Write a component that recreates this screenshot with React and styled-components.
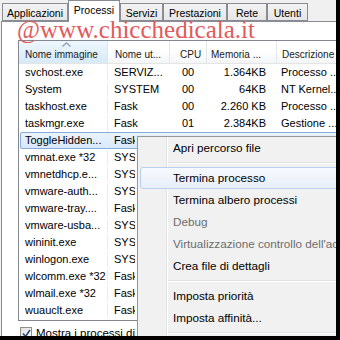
import React from "react";
import styled, { createGlobalStyle } from "styled-components";

const Global = createGlobalStyle`
  html, body { margin: 0; padding: 0; background: #000; }
  body { width: 340px; height: 340px; overflow: hidden; }
`;

const Frame = styled.div`
  width: 336px;
  height: 336px;
  position: relative;
  overflow: hidden;
  background: #f0f0f0;
  display: flex;
  flex-direction: column;
  font-family: "Liberation Sans", Arial, sans-serif;
  color: #000;
`;

const TabStrip = styled.div`
  display: flex;
  align-items: flex-end;
  height: 21px;
  padding-left: 2px;
  position: relative;
  z-index: 2;
`;

const Tab = styled.div`
  box-sizing: border-box;
  width: ${(p) => p.$w}px;
  height: ${(p) => (p.$active ? 22 : 18)}px;
  margin-bottom: ${(p) => (p.$active ? -1 : 0)}px;
  border: 1px solid #898c95;
  border-bottom: ${(p) => (p.$active ? "none" : "1px solid #898c95")};
  background: ${(p) =>
    p.$active ? "#fff" : "linear-gradient(#f3f3f3, #e6e6e6)"};
  display: flex;
  align-items: center;
  justify-content: center;
  padding-top: ${(p) => (p.$active ? 0 : 1)}px;
  padding-bottom: ${(p) => (p.$active ? 4 : 0)}px;
  font-size: 10.5px;
  white-space: nowrap;
`;

const Panel = styled.div`
  flex: 1;
  margin-left: 1px;
  background: #fff;
  border-top: 1px solid #898c95;
  border-left: 1px solid #898c95;
  padding: 18px 0 0 16px;
  display: flex;
  flex-direction: column;
`;

const Watermark = styled.div`
  position: absolute;
  left: 17px;
  top: 22px;
  height: 16px;
  font-family: "Liberation Serif", "Times New Roman", serif;
  font-size: 25px;
  line-height: 16px;
  color: #e25a5a;
  white-space: nowrap;
  z-index: 3;
  pointer-events: none;
`;

const List = styled.div`
  box-sizing: border-box;
  width: 330px;
  height: 281px;
  border: 1px solid #828790;
  border-right: none;
  background: #fff;
  display: flex;
  flex-direction: column;
`;

const Header = styled.div`
  display: flex;
  height: 23px;
  box-sizing: border-box;
  border-bottom: 1px solid #e5e5e5;
  flex: none;
`;

const HeadCell = styled.div`
  position: relative;
  box-sizing: border-box;
  width: ${(p) => p.$w}px;
  flex: none;
  padding-left: ${(p) => p.$pl}px;
  border-right: 1px solid #e3e6ea;
  background: ${(p) =>
    p.$sorted
      ? "linear-gradient(#eef7fd 0%, #e3f1fb 45%, #d7eaf8 100%)"
      : "linear-gradient(#ffffff 0%, #ffffff 45%, #f4f5f7 100%)"};
  font-size: 10px;
  line-height: 23px;
  padding-top: 2px;
  color: #1a1a1a;
  white-space: nowrap;
  overflow: hidden;
`;

const SortArrow = styled.svg`
  position: absolute;
  left: 43px;
  top: 1px;
`;

const Row = styled.div`
  display: flex;
  box-sizing: border-box;
  height: 17px;
  margin-left: 1px;
  border: 1px solid ${(p) => (p.$selected ? "#84acdd" : "transparent")};
  border-radius: 2px;
  background: ${(p) =>
    p.$selected ? "linear-gradient(#eaf3fd, #d9e8fb)" : "transparent"};
  font-size: 11px;
  line-height: 15px;
  flex: none;
`;

const Cell = styled.div`
  box-sizing: border-box;
  width: ${(p) => p.$w}px;
  flex: none;
  padding-left: ${(p) => p.$pl || 0}px;
  padding-right: ${(p) => p.$pr || 0}px;
  text-align: ${(p) => (p.$right ? "right" : "left")};
  border-right: ${(p) => (p.$line ? "1px solid #ececec" : "none")};
  white-space: nowrap;
  overflow: hidden;
`;

const CheckRow = styled.div`
  display: flex;
  align-items: center;
  gap: 4px;
  margin-top: 6px;
  padding-left: 2px;
  font-size: 11.5px;
  white-space: nowrap;
`;

const CheckBox = styled.div`
  box-sizing: border-box;
  width: 12px;
  height: 12px;
  border: 1px solid #8f8f8f;
  background: linear-gradient(135deg, #e0e0e0, #fdfdfd);
  display: flex;
  align-items: center;
  justify-content: center;
  flex: none;
`;

const Menu = styled.div`
  position: absolute;
  left: 137px;
  top: 136px;
  width: 230px;
  box-sizing: border-box;
  border: 1px solid #979797;
  padding: 0 2px 2px 2px;
  background: linear-gradient(
    to right,
    #f1f1f1 0,
    #f1f1f1 28px,
    #e2e3e3 28px,
    #e2e3e3 29px,
    #ffffff 29px,
    #ffffff 30px,
    #f1f1f1 30px
  );
  box-shadow: 2px 2px 3px rgba(0, 0, 0, 0.3);
  z-index: 4;
  font-size: 11.7px;
`;

const Item = styled.div`
  box-sizing: border-box;
  height: 22px;
  line-height: 20px;
  padding-left: 32px;
  border: 1px solid ${(p) => (p.$hover ? "#b6d0ee" : "transparent")};
  border-radius: 3px;
  background: ${(p) =>
    p.$hover ? "linear-gradient(#f6f9fd, #e8eff9)" : "transparent"};
  color: ${(p) => (p.$disabled ? "#6d6d6d" : "#000")};
  white-space: nowrap;
`;

const Separator = styled.div`
  height: 8px;
  margin-left: 28px;
  display: flex;
  flex-direction: column;
  justify-content: center;
  &::before {
    content: "";
    display: block;
    height: 1px;
    background: #e0e0e0;
  }
  &::after {
    content: "";
    display: block;
    height: 1px;
    background: #ffffff;
  }
`;

const tabs = [
  ["Applicazioni", 66],
  ["Processi", 52, true],
  ["Servizi", 43],
  ["Prestazioni", 64],
  ["Rete", 40],
  ["Utenti", 41],
];

/* Rows from the fifth on lie under the context menu past the user column,
   so only their name and user are shown. */
const rows = [
  ["svchost.exe", "SERVIZ...", "00", "1.364KB", "Processo ..."],
  ["System", "SYSTEM", "00", "64KB", "NT Kernel..."],
  ["taskhost.exe", "Fask", "00", "2.260 KB", "Processo ..."],
  ["taskmgr.exe", "Fask", "01", "2.384KB", "Gestione ..."],
  ["ToggleHidden...", "Fask"],
  ["vmnat.exe *32", "SYST"],
  ["vmnetdhcp.e...", "SYST"],
  ["vmware-auth...", "SYST"],
  ["vmware-tray....", "Fask"],
  ["vmware-usba...", "SYST"],
  ["wininit.exe", "SYST"],
  ["winlogon.exe", "SYST"],
  ["wlcomm.exe *32", "Fask"],
  ["wlmail.exe *32", "Fask"],
  ["wuauclt.exe", "Fask"],
];

const menu = [
  { t: "Apri percorso file" },
  { sep: true },
  { t: "Termina processo", hover: true },
  { t: "Termina albero processi" },
  { t: "Debug", disabled: true },
  { t: "Virtualizzazione controllo dell'ac", disabled: true },
  { t: "Crea file di dettagli" },
  { sep: true },
  { t: "Imposta priorità" },
  { t: "Imposta affinità..." },
  { sep: true },
];

export default function App() {
  return (
    <>
      <Global />
      <Frame>
        <TabStrip>
          {tabs.map(([label, w, active]) => (
            <Tab key={label} $w={w} $active={active}>
              {label}
            </Tab>
          ))}
        </TabStrip>
        <Panel>
          <List>
            <Header>
              <HeadCell $w={89} $pl={6} $sorted>
                <SortArrow width="9" height="5" viewBox="0 0 9 5">
                  <path d="M0.5 4.5 L4.5 0.8 L8.5 4.5" fill="none" stroke="#8a9bb0" strokeWidth="1.2" />
                </SortArrow>
                Nome immagine
              </HeadCell>
              <HeadCell $w={62} $pl={7}>Nome ut...</HeadCell>
              <HeadCell $w={37} $pl={10}>CPU</HeadCell>
              <HeadCell $w={70} $pl={4}>Memoria ...</HeadCell>
              <HeadCell $w={80} $pl={5}>Descrizione</HeadCell>
            </Header>
            {rows.map((r, i) => (
              <Row key={r[0]} $selected={i === 4}>
                <Cell $w={87} $pl={4} $line>{r[0]}</Cell>
                <Cell $w={i >= 4 ? 27 : 62} $pl={6}>{r[1]}</Cell>
                {r.length > 2 && (
                  <>
                    <Cell $w={37} $pl={12}>{r[2]}</Cell>
                    <Cell $w={70} $pr={11} $right>{r[3]}</Cell>
                    <Cell $w={80} $pl={4}>{r[4]}</Cell>
                  </>
                )}
              </Row>
            ))}
          </List>
          <CheckRow>
            <CheckBox>
              <svg width="9" height="9" viewBox="0 0 9 9">
                <path d="M1 4.5 L3.5 7.5 L8 1" fill="none" stroke="#2a4a7a" strokeWidth="1.6" />
              </svg>
            </CheckBox>
            Mostra i processi di tu
          </CheckRow>
        </Panel>
        <Watermark>@www.chicchedicala.it</Watermark>
        <Menu>
          {menu.map((m, i) =>
            m.sep ? (
              <Separator key={i} />
            ) : (
              <Item key={i} $hover={m.hover} $disabled={m.disabled}>
                {m.t}
              </Item>
            )
          )}
        </Menu>
      </Frame>
    </>
  );
}
